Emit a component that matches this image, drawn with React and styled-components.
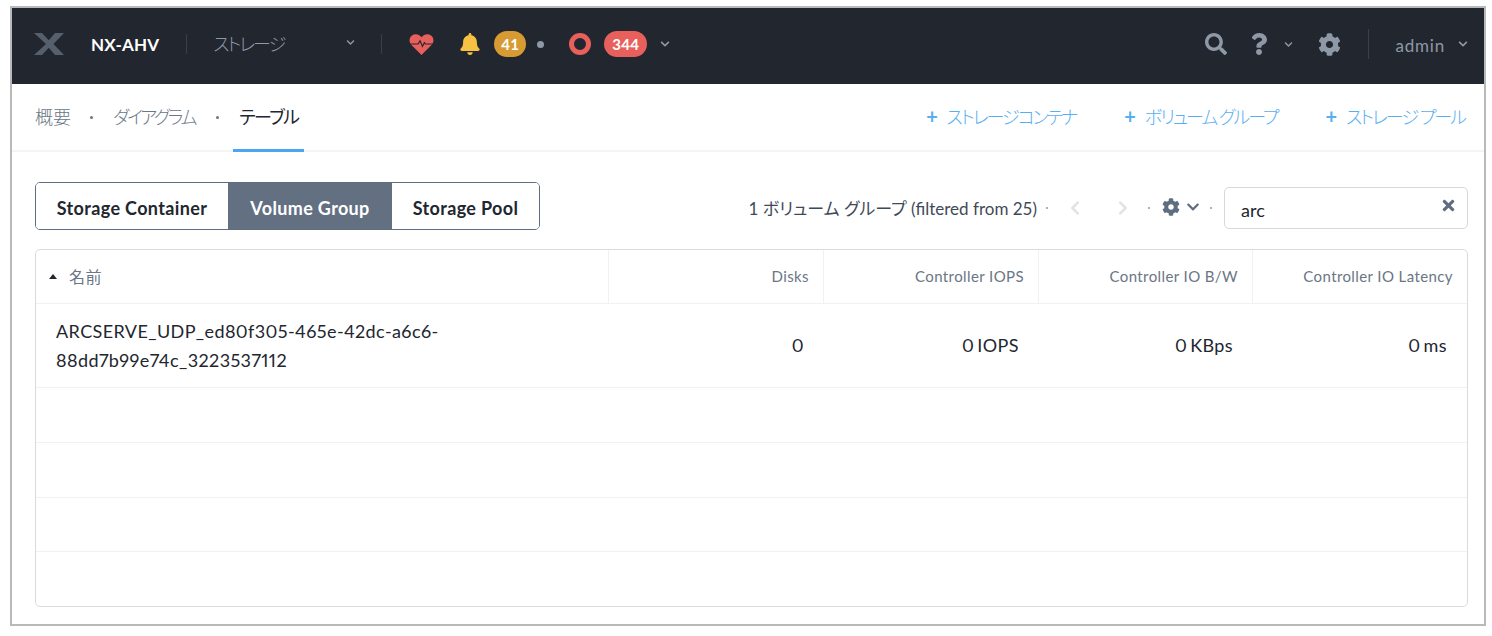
import React from 'react';
import styled, { createGlobalStyle } from 'styled-components';
import { FaBell, FaCog, FaQuestion, FaSearch, FaTimes, FaChevronDown, FaChevronLeft, FaChevronRight } from 'react-icons/fa';

const FONT = '"Lato", "Noto Sans CJK JP", sans-serif';

const GlobalStyle = createGlobalStyle`
    html, body {
        margin: 0;
        padding: 0;
        background: #fff;
        font-family: ${FONT};
        font-feature-settings: "palt";
    }
    * { box-sizing: border-box; }
`

const Frame = styled.div`
    width: 1476px;
    height: 620px;
    margin: 6px 0 0 10px;
    border: 2px solid #b9b9b9;
    display: flex;
    flex-direction: column;
    background: #fff;
`

const Header = styled.header`
    height: 76px;
    flex: none;
    background: #22262f;
    display: flex;
    align-items: center;
    padding: 0 16px 4px 22px;
`

const Logo = styled.svg`
    width: 30px;
    height: 22px;
    flex: none;
`

const ClusterName = styled.span`
    margin-left: 27px;
    color: #fff;
    font-size: 17px;
    font-weight: 700;
    letter-spacing: 0.2px;
`

const NavDivider = styled.span`
    width: 1px;
    height: ${(p) => p.$h || 20}px;
    background: #3a404b;
    margin: ${(p) => p.$m || '0'};
    flex: none;
`

const AppSelect = styled.span`
    width: 142px;
    flex: none;
    display: flex;
    align-items: center;
    justify-content: space-between;
    color: #8f98a6;
    font-size: 18px;
    font-weight: 300;
    letter-spacing: -2px;
    margin-top: -3px;
`

const Chevron = styled(FaChevronDown)`
    font-size: ${(p) => p.$s || 9}px;
    color: ${(p) => p.$c || '#8f98a6'};
    margin-left: ${(p) => p.$ml || 0}px;
    flex: none;
`

const Pill = styled.span`
    height: 26px;
    min-width: ${(p) => p.$w}px;
    margin-left: ${(p) => p.$ml}px;
    border-radius: 13px;
    background: ${(p) => p.$bg};
    color: #fff;
    font-size: 15px;
    font-weight: 700;
    letter-spacing: 0.3px;
    display: inline-flex;
    align-items: center;
    justify-content: center;
    flex: none;
`

const Dot = styled.span`
    width: 7px;
    height: 7px;
    border-radius: 50%;
    background: #8f98a6;
    margin-left: 11px;
    flex: none;
`

const Ring = styled.span`
    width: 22px;
    height: 22px;
    margin-left: 25px;
    border-radius: 50%;
    border: 5.5px solid #e8605c;
    flex: none;
`

const Spacer = styled.div`
    flex: 1;
`

const HeaderIcon = styled.span`
    display: inline-flex;
    color: ${(p) => p.$c || '#8f98a6'};
    font-size: ${(p) => p.$s}px;
    margin-left: ${(p) => p.$ml || 0}px;
    flex: none;
`

const UserName = styled.span`
    color: #8f98a6;
    font-size: 17px;
    letter-spacing: 0.8px;
    margin-top: 2px;
`

const SubNav = styled.div`
    height: 68px;
    flex: none;
    border-bottom: 2px solid #f3f4f5;
    display: flex;
    justify-content: space-between;
    padding: 0 19px 0 23px;
`

const Tabs = styled.nav`
    display: flex;
    align-items: stretch;
`

const Tab = styled.a`
    position: relative;
    display: flex;
    align-items: center;
    height: 68px;
    padding-bottom: 5px;
    margin-right: ${(p) => p.$tight || 0}px;
    font-size: 18px;
    font-weight: ${(p) => (p.$active ? 400 : 300)};
    letter-spacing: ${(p) => -(p.$tight || 0)}px;
    color: ${(p) => (p.$active ? '#22262f' : '#6a7686')};

    ${(p) => p.$active && `
        &:after {
            content: '';
            position: absolute;
            left: -6px;
            right: -6px;
            bottom: 0;
            height: 3px;
            background: #4ba5f0;
        }
    `}
`

const TabDot = styled.span`
    width: 3px;
    height: 3px;
    margin: 1px 20px 0 19px;
    border-radius: 50%;
    background: #6a7686;
    align-self: center;
`

const Actions = styled.div`
    display: flex;
    align-items: center;
    gap: 48px;
`

const ActionLink = styled.a`
    display: flex;
    align-items: center;
    gap: 11px;
    padding-bottom: 2px;
    color: #58aef2;
    font-size: 18px;
    font-weight: 300;
    letter-spacing: -2px;
`

const Plus = styled.span`
    font-size: 20px;
    font-weight: 700;
    line-height: 1;
`

const Content = styled.main`
    flex: 1;
    padding: 30px 16px 17px 23px;
    display: flex;
    flex-direction: column;
    gap: 19px;
    min-height: 0;
`

const Toolbar = styled.div`
    height: 48px;
    flex: none;
    display: flex;
    align-items: center;
    justify-content: space-between;
`

const Segments = styled.div`
    display: flex;
    height: 48px;
    border: 1.5px solid #5f6d80;
    border-radius: 5px;
    overflow: hidden;
`

const Segment = styled.button`
    width: ${(p) => p.$w}px;
    border: none;
    padding: 3px 0 0 0;
    font-family: ${FONT};
    font-size: 18px;
    font-weight: 700;
    letter-spacing: 0.35px;
    color: ${(p) => (p.$active ? '#fff' : '#22262f')};
    background: ${(p) => (p.$active ? '#627082' : '#fff')};
`

const Tools = styled.div`
    display: flex;
    align-items: center;
    padding-top: 4px;
`

const Count = styled.span`
    color: #3f4a58;
    font-size: 17px;
    font-weight: 400;
    position: relative;
    top: -1px;
`

const SmallDot = styled.span`
    width: 2px;
    height: 2px;
    border-radius: 50%;
    background: #8f98a6;
    margin: ${(p) => p.$m || '0 9px'};
    flex: none;
`

const Pager = styled.span`
    display: inline-flex;
    color: #dfe2e6;
    font-size: 16px;
    margin-left: ${(p) => p.$ml || 0}px;
`

const GearButton = styled.span`
    display: inline-flex;
    align-items: center;
    gap: 6px;
    color: #5f6d80;
    font-size: 18px;
    margin-top: -2px;
`

const SearchBox = styled.div`
    width: 244px;
    height: 42px;
    border: 1.5px solid #d3d8de;
    border-radius: 5px;
    display: flex;
    align-items: center;
    justify-content: space-between;
    padding: 0 10px 0 16px;
`

const SearchValue = styled.span`
    color: #22262f;
    font-size: 18px;
    margin-top: 3px;
`

const ClearIcon = styled(FaTimes)`
    color: #5f6d80;
    font-size: 17px;
    margin-top: -6px;
`

const Table = styled.div`
    flex: 1;
    border: 1.5px solid #d7dbe1;
    border-radius: 5px;
    overflow: hidden;
    display: grid;
    grid-template-columns: 573px 215px 215px 214px 1fr;
    grid-template-rows: 54px 84px 55px 55px 54px 1fr;
`

const HeadCell = styled.div`
    display: flex;
    align-items: center;
    justify-content: ${(p) => (p.$left ? 'flex-start' : 'flex-end')};
    padding: ${(p) => (p.$left ? '0 0 1px 13px' : '0 14px 1px 0')};
    border-bottom: 1px solid #eff1f3;
    border-right: ${(p) => (p.$last ? 'none' : '1px solid #eff1f3')};
    color: #6a7686;
    font-size: ${(p) => (p.$left ? 16 : 15)}px;
    font-weight: 400;
    letter-spacing: 0.4px;
`

const SortArrow = styled.span`
    width: 0;
    height: 0;
    margin-right: 12px;
    border-left: 4px solid transparent;
    border-right: 4px solid transparent;
    border-bottom: 5px solid #22262f;
`

const BodyCell = styled.div`
    display: flex;
    align-items: center;
    justify-content: ${(p) => (p.$left ? 'flex-start' : 'flex-end')};
    padding: ${(p) => (p.$left ? '0 0 0 20px' : '0 20px 0 0')};
    border-bottom: 1px solid #eff1f3;
    color: #22262f;
    font-size: 18px;
    line-height: 29px;
    letter-spacing: 0.4px;
    word-spacing: -2px;
    font-variant-numeric: proportional-nums;
`

const EmptyRow = styled.div`
    grid-column: 1 / -1;
    border-bottom: ${(p) => (p.$last ? 'none' : '1px solid #eff1f3')};
`

function HeartIcon() {
    return (
        <svg width="25" height="21" viewBox="0 0 26 22">
            <path d="M13 22 L2.5 11.5 C-0.5 8.5 0 3.5 3 1.5 C6 -0.5 10.5 0 13 3.5 C15.5 0 20 -0.5 23 1.5 C26 3.5 26.5 8.5 23.5 11.5 Z" fill="#e8605c" />
            <path d="M1 10.5 H9.5 L11.5 7 L14 13 L16 9 L17 10.5 H25" fill="none" stroke="#22262f" strokeWidth="1.2" />
        </svg>
    );
}

export default function App() {
    return (
        <>
            <GlobalStyle />
            <Frame>
                <Header>
                    <Logo viewBox="0 0 30 22">
                        <path d="M0 0 H8 L15.5 8 L12 11 Z M0 22 H8 L15.5 14 L12 11 Z" fill="#565f6c" />
                        <path d="M30 0 H21 L11.5 11 L21 22 H30 L19.5 11 Z" fill="#565f6c" />
                    </Logo>
                    <ClusterName>NX-AHV</ClusterName>
                    <NavDivider $h={20} $m="0 26px 0 27px" />
                    <AppSelect>
                        ストレージ
                        <Chevron $s={9} />
                    </AppSelect>
                    <NavDivider $h={20} $m="0 27px 0 26px" />
                    <HeartIcon />
                    <HeaderIcon $s={22} $ml={25} $c="#f7c244"><FaBell /></HeaderIcon>
                    <Pill $w={32} $ml={13} $bg="#d89a32">41</Pill>
                    <Dot />
                    <Ring />
                    <Pill $w={43} $ml={13} $bg="#e8605c">344</Pill>
                    <Chevron $s={10} $ml={13} />
                    <Spacer />
                    <HeaderIcon $s={22}><FaSearch /></HeaderIcon>
                    <HeaderIcon $s={22} $ml={21}><FaQuestion /></HeaderIcon>
                    <Chevron $s={9} $ml={14} />
                    <HeaderIcon $s={23} $ml={25}><FaCog /></HeaderIcon>
                    <NavDivider $h={30} $m="0 26px 0 27px" />
                    <UserName>admin</UserName>
                    <Chevron $s={10} $ml={13} />
                </Header>
                <SubNav>
                    <Tabs>
                        <Tab>概要</Tab>
                        <TabDot />
                        <Tab $tight={2.4}>ダイアグラム</Tab>
                        <TabDot />
                        <Tab $active $tight={1.7}>テーブル</Tab>
                    </Tabs>
                    <Actions>
                        <ActionLink><Plus>+</Plus>ストレージコンテナ</ActionLink>
                        <ActionLink><Plus>+</Plus>ボリューム グループ</ActionLink>
                        <ActionLink><Plus>+</Plus>ストレージ プール</ActionLink>
                    </Actions>
                </SubNav>
                <Content>
                    <Toolbar>
                        <Segments>
                            <Segment $w={192}>Storage Container</Segment>
                            <Segment $w={164} $active>Volume Group</Segment>
                            <Segment $w={147}>Storage Pool</Segment>
                        </Segments>
                        <Tools>
                            <Count>1 ボリューム グループ (filtered from 25)</Count>
                            <SmallDot />
                            <Pager $ml={10}><FaChevronLeft /></Pager>
                            <Pager $ml={32}><FaChevronRight /></Pager>
                            <SmallDot $m="0 12px 0 17px" />
                            <GearButton>
                                <FaCog />
                                <Chevron $s={14} $c="#5f6d80" />
                            </GearButton>
                            <SmallDot $m="0 12px 0 10px" />
                            <SearchBox>
                                <SearchValue>arc</SearchValue>
                                <ClearIcon />
                            </SearchBox>
                        </Tools>
                    </Toolbar>
                    <Table>
                        <HeadCell $left><SortArrow />名前</HeadCell>
                        <HeadCell>Disks</HeadCell>
                        <HeadCell>Controller IOPS</HeadCell>
                        <HeadCell>Controller IO B/W</HeadCell>
                        <HeadCell $last>Controller IO Latency</HeadCell>
                        <BodyCell $left>ARCSERVE_UDP_ed80f305-465e-42dc-a6c6-<br />88dd7b99e74c_3223537112</BodyCell>
                        <BodyCell>0</BodyCell>
                        <BodyCell>0 IOPS</BodyCell>
                        <BodyCell>0 KBps</BodyCell>
                        <BodyCell>0 ms</BodyCell>
                        <EmptyRow />
                        <EmptyRow />
                        <EmptyRow />
                        <EmptyRow $last />
                    </Table>
                </Content>
            </Frame>
        </>
    );
}
